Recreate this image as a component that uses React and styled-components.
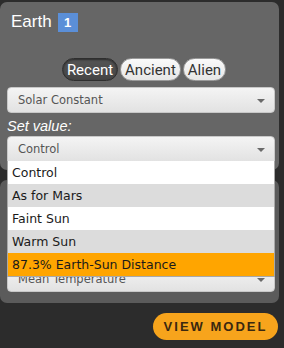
import React from "react";
import styled, { createGlobalStyle } from "styled-components";

const Global = createGlobalStyle`
  html, body { margin: 0; padding: 0; background: #2c2c2c; }
  body { width: 284px; height: 348px; overflow: hidden; font-family: "Liberation Sans", Arial, sans-serif; }
`;

const Page = styled.div`
  width: 284px;
  height: 348px;
  padding-top: 2px;
  box-sizing: border-box;
  display: flex;
  flex-direction: column;
  background: #2c2c2c;
`;

const Panel = styled.div`
  position: relative;
  width: 279px;
  box-sizing: border-box;
  background: ${(p) => p.$bg};
  border-radius: 7px;
  padding: ${(p) => p.$pad};
  display: flex;
  flex-direction: column;
  height: ${(p) => p.$h}px;
  justify-content: ${(p) => (p.$end ? "flex-end" : "flex-start")};
  margin-top: ${(p) => p.$mt || 0}px;
`;

const TitleRow = styled.div`
  display: flex;
  align-items: center;
  gap: 6px;
  height: 20px;
  padding-left: 4px;
`;

const Title = styled.span`
  color: #fff;
  font-size: 17px;
  font-family: "Liberation Sans", Arial, sans-serif;
`;

const Badge = styled.span`
  width: 20px;
  height: 19px;
  background: #5b8fd8;
  color: #fff;
  font-size: 13px;
  font-weight: bold;
  display: flex;
  align-items: center;
  justify-content: center;
`;

const Tabs = styled.div`
  display: flex;
  justify-content: center;
  gap: 2px;
  margin-top: 26px;
  padding-left: 6px;
`;

const Tab = styled.div`
  height: 23px;
  box-sizing: border-box;
  padding: 0 4px;
  border-radius: 12px;
  display: flex;
  align-items: center;
  font-family: "Liberation Sans Narrow", "Roboto", sans-serif;
  font-size: 15px;
  border: 1px solid ${(p) => (p.$active ? "#2e2e2e" : "#9a9a9a")};
  background: ${(p) => (p.$active ? "linear-gradient(#555, #454545)" : "linear-gradient(#fafafa, #e6e6e6)")};
  color: ${(p) => (p.$active ? "#fff" : "#333")};
  box-shadow: ${(p) => (p.$active ? "inset 0 1px 2px rgba(0,0,0,0.5)" : "none")};
`;

const Select = styled.div`
  position: relative;
  height: 26px;
  box-sizing: border-box;
  margin-top: ${(p) => p.$mt || 0}px;
  width: 268px;
  border: 1px solid #c8c8c8;
  border-radius: ${(p) => (p.$open ? "4px 4px 0 0" : "4px")};
  background: linear-gradient(#f4f4f4, #e2e2e2);
  display: flex;
  align-items: center;
  padding-left: 10px;
  color: #555;
  font-family: "DejaVu Sans", Verdana, sans-serif;
  font-size: 11.5px;
`;

const Caret = styled.span`
  position: absolute;
  right: 9px;
  top: 11px;
  width: 0;
  height: 0;
  border-left: 4px solid transparent;
  border-right: 4px solid transparent;
  border-top: 4px solid #6a6a6a;
`;

const Label = styled.div`
  color: #fff;
  font-style: italic;
  font-size: 14.5px;
  margin-top: 5px;
  height: 19px;
`;

const List = styled.div`
  position: absolute;
  top: 100%;
  left: -1px;
  right: -1px;
  z-index: 5;
  background: #fff;
  border: 1px solid #a8a8a8;
  border-top: none;
`;

const Option = styled.div`
  height: 23px;
  display: flex;
  align-items: center;
  padding-left: 4px;
  font-family: "DejaVu Sans", Verdana, sans-serif;
  font-size: 12.5px;
  color: #1a1a1a;
  background: ${(p) => (p.$hi ? "#ffa500" : p.$alt ? "#dcdcdc" : "#fff")};
`;

const Footer = styled.div`
  display: flex;
  justify-content: flex-end;
  padding-right: 6px;
  margin-top: 10px;
`;

const Button = styled.div`
  width: 125px;
  height: 27px;
  border-radius: 14px;
  background: #f7a41c;
  color: #3a2810;
  font-weight: bold;
  font-size: 13px;
  letter-spacing: 2px;
  display: flex;
  align-items: center;
  justify-content: center;
  font-family: "Liberation Sans", Arial, sans-serif;
`;

const options = ["Control", "As for Mars", "Faint Sun", "Warm Sun", "87.3% Earth-Sun Distance"];

export default function App() {
  return (
    <>
      <Global />
      <Page>
        <Panel $bg="#666" $pad="10px 4px 8px 7px" $h={168}>
          <TitleRow>
            <Title>Earth</Title>
            <Badge>1</Badge>
          </TitleRow>
          <Tabs>
            <Tab $active>Recent</Tab>
            <Tab>Ancient</Tab>
            <Tab>Alien</Tab>
          </Tabs>
          <Select $mt={6}>
            Solar Constant
            <Caret />
          </Select>
          <Label>Set value:</Label>
          <Select $open>
            Control
            <Caret />
            <List>
              {options.map((o, i) => (
                <Option key={o} $alt={i % 2 === 1} $hi={i === 4}>
                  {o}
                </Option>
              ))}
            </List>
          </Select>
        </Panel>
        <Panel $bg="#5b5b5b" $pad="0 4px 11px 7px" $h={123} $mt={10} $end>
          <Select>Mean Temperature<Caret /></Select>
        </Panel>
        <Footer>
          <Button>VIEW MODEL</Button>
        </Footer>
      </Page>
    </>
  );
}
